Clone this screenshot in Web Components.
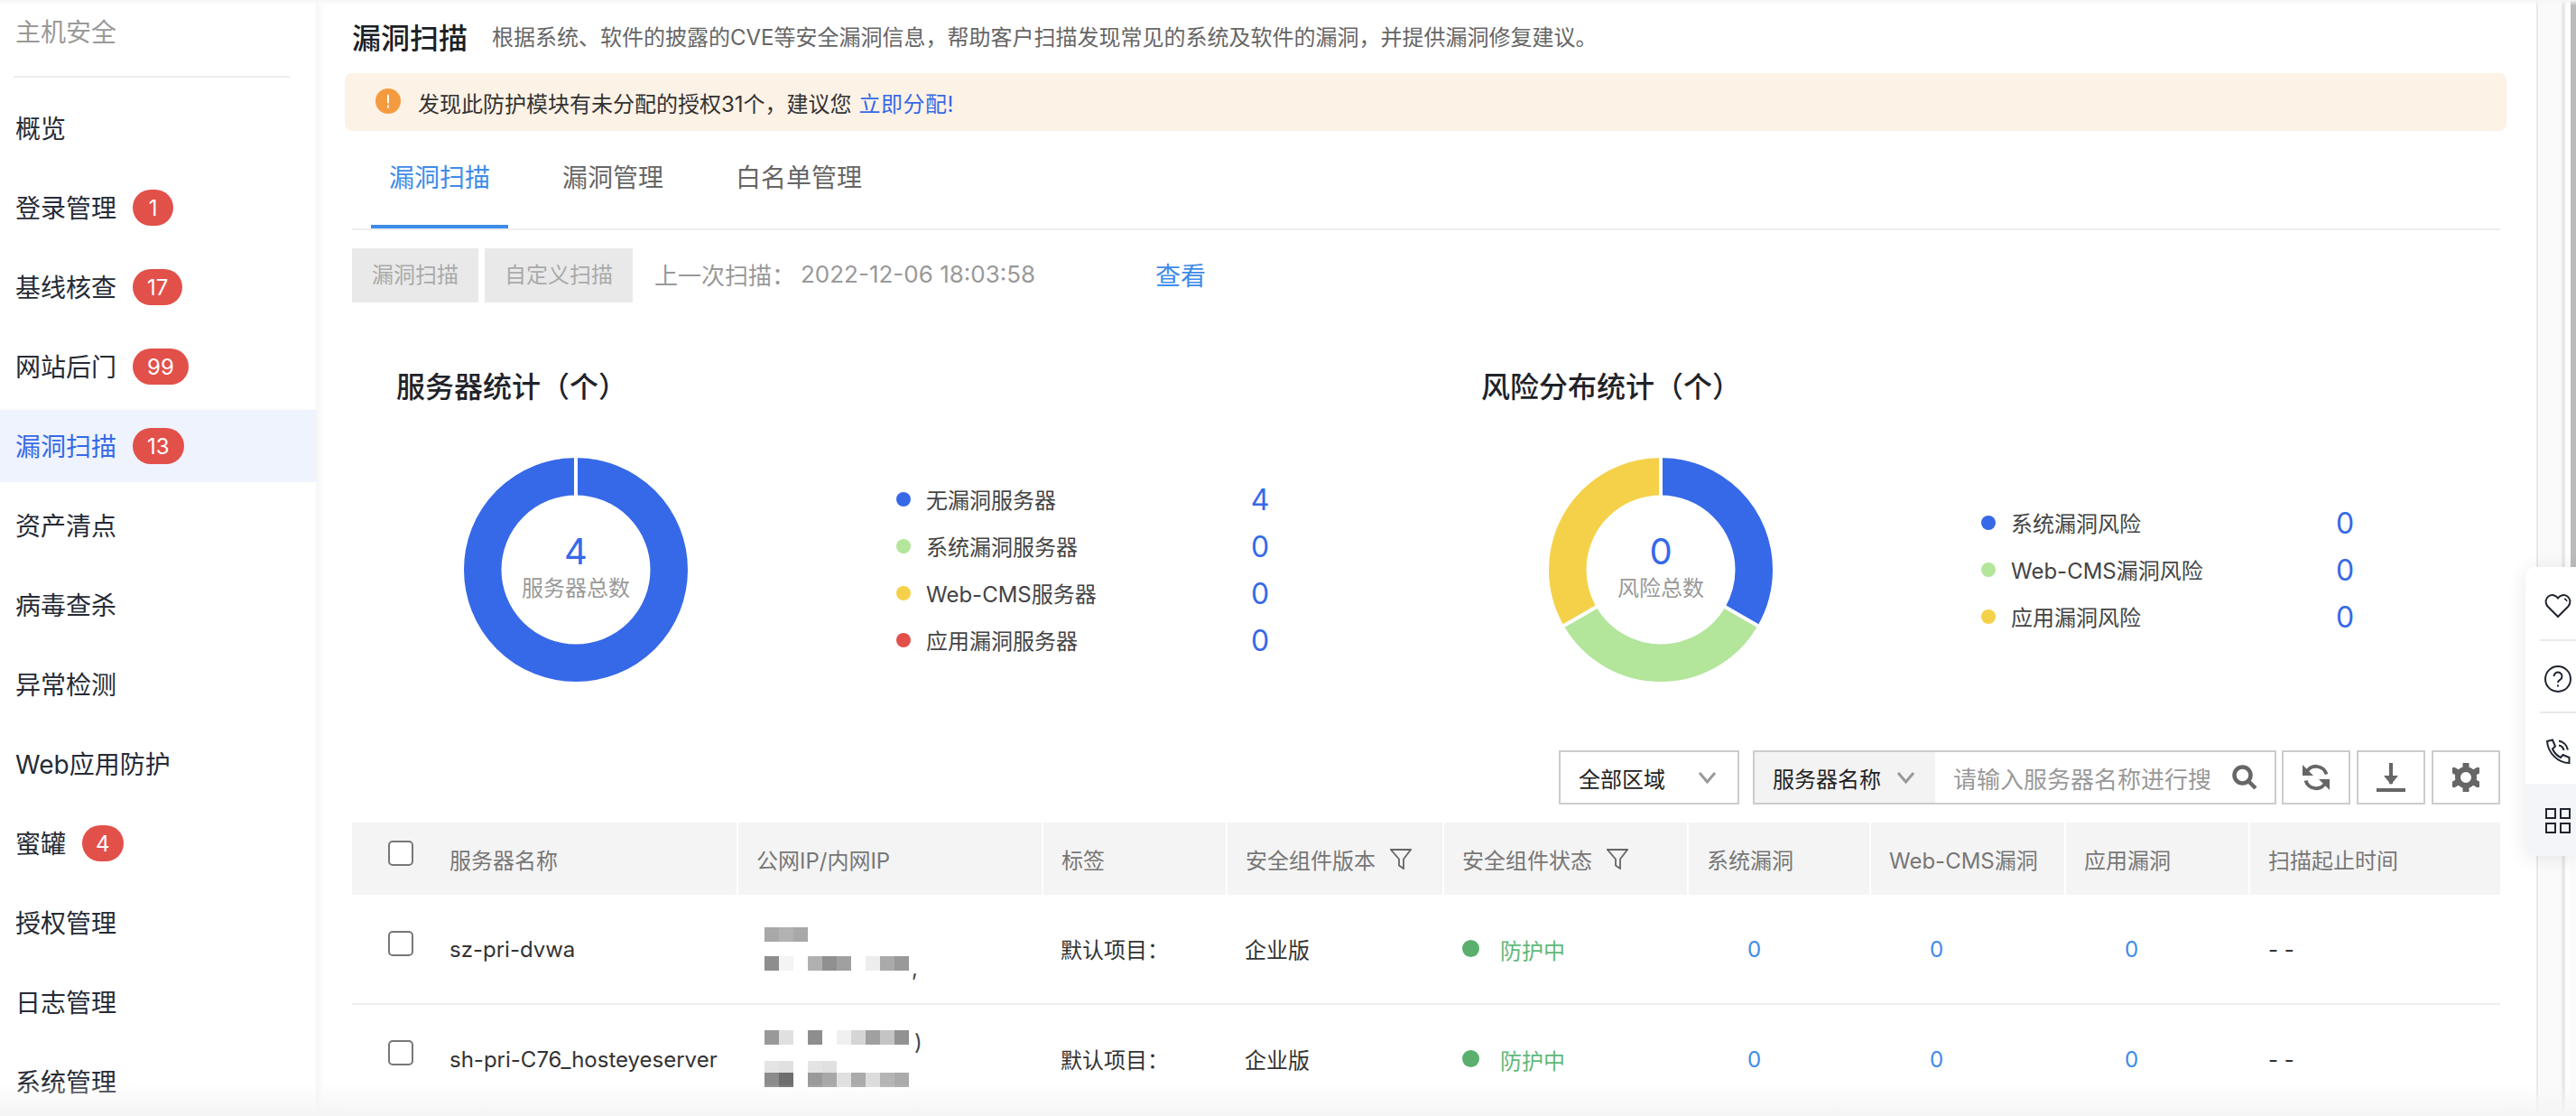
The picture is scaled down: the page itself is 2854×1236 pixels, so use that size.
<!doctype html>
<html lang="zh">
<head>
<meta charset="utf-8">
<title>漏洞扫描</title>
<style>
  html, body { margin: 0; height: 1236px; overflow: hidden; background: #fff; }
  body { font-family: Inter, "Noto Sans CJK SC", sans-serif; }
</style>
</head>
<body>
<app-shell>
  <side-nav slot="nav" heading="主机安全">
    <nav-item>概览</nav-item>
    <nav-item badge="1">登录管理</nav-item>
    <nav-item badge="17">基线核查</nav-item>
    <nav-item badge="99">网站后门</nav-item>
    <nav-item badge="13" active>漏洞扫描</nav-item>
    <nav-item>资产清点</nav-item>
    <nav-item>病毒查杀</nav-item>
    <nav-item>异常检测</nav-item>
    <nav-item>Web应用防护</nav-item>
    <nav-item badge="4">蜜罐</nav-item>
    <nav-item>授权管理</nav-item>
    <nav-item>日志管理</nav-item>
    <nav-item>系统管理</nav-item>
  </side-nav>

  <page-head heading="漏洞扫描">根据系统、软件的披露的CVE等安全漏洞信息，帮助客户扫描发现常见的系统及软件的漏洞，并提供漏洞修复建议。</page-head>
  <alert-bar link="立即分配!">发现此防护模块有未分配的授权31个，建议您</alert-bar>
  <tab-bar>
    <tab-item active>漏洞扫描</tab-item>
    <tab-item>漏洞管理</tab-item>
    <tab-item>白名单管理</tab-item>
  </tab-bar>
  <scan-bar time="2022-12-06 18:03:58"></scan-bar>

  <stat-row>
    <stat-panel heading="服务器统计（个）" total="4" label="服务器总数" colors="#3669e8">
      <legend-row color="#3669e8" value="4">无漏洞服务器</legend-row>
      <legend-row color="#b3e59b" value="0">系统漏洞服务器</legend-row>
      <legend-row color="#f5d14a" value="0">Web-CMS服务器</legend-row>
      <legend-row color="#e2504a" value="0">应用漏洞服务器</legend-row>
    </stat-panel>
    <stat-panel heading="风险分布统计（个）" total="0" label="风险总数" colors="#3669e8,#b3e59b,#f5d14a">
      <legend-row color="#3669e8" value="0">系统漏洞风险</legend-row>
      <legend-row color="#b3e59b" value="0">Web-CMS漏洞风险</legend-row>
      <legend-row color="#f5d14a" value="0">应用漏洞风险</legend-row>
    </stat-panel>
  </stat-row>

  <table-tools></table-tools>

  <scan-table>
    <scan-row head>
      <scan-cell head first><check-box></check-box>服务器名称</scan-cell>
      <scan-cell head>公网IP/内网IP</scan-cell>
      <scan-cell head>标签</scan-cell>
      <scan-cell head>安全组件版本<filter-icon></filter-icon></scan-cell>
      <scan-cell head>安全组件状态<filter-icon></filter-icon></scan-cell>
      <scan-cell head>系统漏洞</scan-cell>
      <scan-cell head>Web-CMS漏洞</scan-cell>
      <scan-cell head>应用漏洞</scan-cell>
      <scan-cell head>扫描起止时间</scan-cell>
    </scan-row>
    <scan-row>
      <scan-cell first><check-box></check-box>sz-pri-dvwa</scan-cell>
      <scan-cell stack>
        <ip-blur cells="a8a8a8 b2b2b2 a8a8a8"></ip-blur>
        <ip-blur cells="8e8e8e f4f4f4 . b0b0b0 909090 a0a0a0 . ededed aaaaaa 999999" tail="," tail-x="3"></ip-blur>
      </scan-cell>
      <scan-cell tight>默认项目：</scan-cell>
      <scan-cell tight>企业版</scan-cell>
      <scan-cell><status-dot>防护中</status-dot></scan-cell>
      <scan-cell num>0</scan-cell>
      <scan-cell num>0</scan-cell>
      <scan-cell num>0</scan-cell>
      <scan-cell>- -</scan-cell>
    </scan-row>
    <scan-row>
      <scan-cell first><check-box></check-box>sh-pri-C76_hosteyeserver</scan-cell>
      <scan-cell stack>
        <ip-blur cells="999999 e0e0e0 . 8e8e8e . f0f0f0 d5d5d5 a0a0a0 c4c4c4 929292" tail=")" tail-x="6"></ip-blur>
        <ip-blur gap cells="e4e4e4 e0e0e0 . e4e4e4 e0e0e0" h="13"></ip-blur>
        <ip-blur cells="8c8c8c 6e6e6e . 9a9a9a a8a8a8 e0e0e0 aaaaaa dcdcdc b4b4b4 aaaaaa"></ip-blur>
      </scan-cell>
      <scan-cell tight>默认项目：</scan-cell>
      <scan-cell tight>企业版</scan-cell>
      <scan-cell><status-dot>防护中</status-dot></scan-cell>
      <scan-cell num>0</scan-cell>
      <scan-cell num>0</scan-cell>
      <scan-cell num>0</scan-cell>
      <scan-cell>- -</scan-cell>
    </scan-row>
  </scan-table>

  <float-dock slot="over"></float-dock>
</app-shell>

<script>
const FONT = 'Inter, "Noto Sans CJK SC", sans-serif';

class AppShell extends HTMLElement {
  constructor() {
    super();
    this.attachShadow({ mode: 'open' }).innerHTML = `
      <style>
        :host {
          display: grid;
          grid-template-columns: 350px 1fr 44px;
          height: 1236px;
          overflow: hidden;
          position: relative;
          font-family: ${FONT};
          background: #fff;
        }
        main {
          display: flex;
          flex-direction: column;
          padding: 0 40px;
          min-width: 0;
          height: 1236px;
          box-sizing: border-box;
          background: linear-gradient(90deg, #f6f6f6, #fff 10px);
        }
        .gutter {
          display: grid;
          grid-template-columns: 2px 26px 4px 6px 6px;
          height: 1236px;
        }
        .gutter i:nth-child(1), .gutter i:nth-child(3) { background: #e9e9e9; }
        .gutter i:nth-child(2) { background: #fafafa; }
        .gutter i:nth-child(4) { background: #fdfdfd; }
        .gutter i:nth-child(5) { background: linear-gradient(#bbb 800px, #fbfbfb 800px); }
        .fade {
          position: absolute;
          left: 0;
          right: 0;
          pointer-events: none;
        }
        .top { top: 0; height: 6px; background: linear-gradient(#f6f6f6, rgba(255,255,255,0)); }
        .bottom { bottom: 0; height: 36px; background: linear-gradient(rgba(245,245,245,0), #f5f5f5); }
      </style>
      <slot name="nav"></slot>
      <main><slot></slot></main>
      <div class="gutter"><i></i><i></i><i></i><i></i><i></i></div>
      <div class="fade top"></div>
      <div class="fade bottom"></div>
      <slot name="over"></slot>
    `;
  }
}

class SideNav extends HTMLElement {
  constructor() {
    super();
    this.attachShadow({ mode: 'open' }).innerHTML = `
      <style>
        :host {
          display: block;
          width: 350px;
          background: #fff;
        }
        h2 {
          margin: 0 15px;
          padding: 0 2px;
          height: 84px;
          box-sizing: content-box;
          border-bottom: 2px solid #eeeeee;
          width: 302px;
          font-size: 28px;
          font-weight: 400;
          line-height: 72px;
          color: #999;
        }
        .list {
          display: flex;
          flex-direction: column;
          gap: 8px;
          padding-top: 16px;
        }
      </style>
      <h2>${this.getAttribute('heading')}</h2>
      <div class="list"><slot></slot></div>
    `;
  }
}

class NavItem extends HTMLElement {
  constructor() {
    super();
    const badge = this.getAttribute('badge');
    this.attachShadow({ mode: 'open' }).innerHTML = `
      <style>
        :host {
          display: flex;
          align-items: center;
          gap: 18px;
          height: 80px;
          padding-left: 17px;
          font-size: 28px;
          color: #262b36;
        }
        :host([active]) { background: #eff3fd; color: #3669e8; }
        span { margin-bottom: 3px; }
        b {
          display: block;
          min-width: 15px;
          height: 40px;
          padding: 0 15px;
          border-radius: 20px;
          background: #e2504a;
          color: #fff;
          font-size: 24px;
          font-weight: 400;
          line-height: 41px;
          text-align: center;
        }
        b.two { padding: 0 16px; }
      </style>
      <span><slot></slot></span>
      ${badge ? `<b class="${badge.length > 1 ? 'two' : ''}">${badge}</b>` : ''}
    `;
  }
}

class PageHead extends HTMLElement {
  constructor() {
    super();
    this.attachShadow({ mode: 'open' }).innerHTML = `
      <style>
        :host {
          display: flex;
          align-items: center;
          gap: 27px;
          height: 81px;
          flex: none;
          box-sizing: border-box;
          padding-bottom: 2px;
        }
        h1 { margin: 0; font-size: 32px; font-weight: 500; color: #1b1f27; }
        p { margin: 0; font-size: 24px; color: #666; }
      </style>
      <h1>${this.getAttribute('heading')}</h1>
      <p><slot></slot></p>
    `;
  }
}

class AlertBar extends HTMLElement {
  constructor() {
    super();
    this.attachShadow({ mode: 'open' }).innerHTML = `
      <style>
        :host {
          display: flex;
          align-items: center;
          flex: none;
          height: 64px;
          margin: 0 -7px 0 -8px;
          padding-left: 34px;
          border-radius: 8px;
          background: #fdf2e6;
          font-size: 24px;
          color: #333;
        }
        svg { margin-right: 19px; margin-bottom: 2px; }
        a { margin-left: 8px; color: #3669e8; letter-spacing: 0.5px; }
      </style>
      <svg width="28" height="28" viewBox="0 0 28 28">
        <circle cx="14" cy="14" r="14" fill="#f59b3f"/>
        <rect x="13" y="6.500" width="2" height="10" rx="1" fill="#fff"/>
        <rect x="13" y="18.500" width="2" height="3" fill="#fff"/>
      </svg>
      <span><slot></slot></span><a>${this.getAttribute('link')}</a>
    `;
  }
}

class TabBar extends HTMLElement {
  constructor() {
    super();
    this.attachShadow({ mode: 'open' }).innerHTML = `
      <style>
        :host {
          display: flex;
          gap: 40px;
          flex: none;
          height: 110px;
          box-sizing: border-box;
          padding-left: 21px;
          border-bottom: 2px solid #eeeeee;
        }
      </style>
      <slot></slot>
    `;
  }
}

class TabItem extends HTMLElement {
  constructor() {
    super();
    this.attachShadow({ mode: 'open' }).innerHTML = `
      <style>
        :host {
          display: block;
          height: 108px;
          box-sizing: border-box;
          padding: 34px 20px 0;
          font-size: 28px;
          line-height: 36px;
          color: #666;
        }
        :host([active]) { color: #3e8bea; border-bottom: 4px solid #3e8bea; }
      </style>
      <slot></slot>
    `;
  }
}

class ScanBar extends HTMLElement {
  constructor() {
    super();
    this.attachShadow({ mode: 'open' }).innerHTML = `
      <style>
        :host {
          display: flex;
          align-items: center;
          flex: none;
          height: 60px;
          margin-top: 20px;
          font-size: 24px;
          color: #999;
        }
        .btn {
          height: 60px;
          padding: 0 22px;
          margin-right: 7px;
          background: #e9e9e9;
          color: #aaa;
          line-height: 60px;
        }
        .last { margin-left: 17px; width: 162px; font-size: 26px; padding-bottom: 4px; }
        .time { width: 393px; font-size: 26px; padding-bottom: 3px; }
        a { font-size: 28px; color: #3e8bea; padding-bottom: 3px; }
      </style>
      <span class="btn">漏洞扫描</span>
      <span class="btn">自定义扫描</span>
      <span class="last">上一次扫描：</span>
      <span class="time">${this.getAttribute('time')}</span>
      <a>查看</a>
    `;
  }
}

class StatRow extends HTMLElement {
  constructor() {
    super();
    this.attachShadow({ mode: 'open' }).innerHTML = `
      <style>
        :host {
          display: grid;
          grid-template-columns: 1202px 1fr;
          flex: none;
          padding-top: 69px;
        }
      </style>
      <slot></slot>
    `;
  }
}

class StatPanel extends HTMLElement {
  constructor() {
    super();
    const colors = this.getAttribute('colors').split(',');
    const r = 103.25;
    const len = 2 * Math.PI * r;
    const seg = len / colors.length;
    const arcs = colors.map((c, i) => `
      <circle cx="124" cy="124" r="${r}" fill="none" stroke="${c}" stroke-width="41.5"
        stroke-dasharray="${seg} ${len - seg}" stroke-dashoffset="${-seg * i}"
        transform="rotate(-90 124 124)"/>`).join('');
    const gaps = colors.map((c, i) => `
      <line x1="124" y1="124" x2="124" y2="0" stroke="#fff" stroke-width="4"
        transform="rotate(${360 / colors.length * i} 124 124)"/>`).join('');
    this.attachShadow({ mode: 'open' }).innerHTML = `
      <style>
        :host { display: block; }
        h3 {
          margin: 3px 0 56px 49px;
          font-size: 32px;
          font-weight: 500;
          line-height: 44px;
          color: #1f2329;
        }
        .body { display: flex; align-items: center; padding-left: 124px; }
        .donut { display: grid; width: 248px; height: 248px; margin-right: 231px; }
        .donut > * { grid-area: 1 / 1; }
        .center {
          display: flex;
          flex-direction: column;
          align-items: center;
          justify-content: center;
        }
        .num { font-size: 40px; line-height: 42px; color: #3669e8; }
        .lab { font-size: 24px; line-height: 40px; color: #999; }
        .legend { display: flex; flex-direction: column; }
      </style>
      <h3>${this.getAttribute('heading')}</h3>
      <div class="body">
        <div class="donut">
          <svg width="248" height="248" viewBox="0 0 248 248">${arcs}${gaps}</svg>
          <div class="center">
            <span class="num">${this.getAttribute('total')}</span>
            <span class="lab">${this.getAttribute('label')}</span>
          </div>
        </div>
        <div class="legend"><slot></slot></div>
      </div>
    `;
  }
}

class LegendRow extends HTMLElement {
  constructor() {
    super();
    this.attachShadow({ mode: 'open' }).innerHTML = `
      <style>
        :host {
          display: grid;
          grid-template-columns: 33px 350px 40px;
          align-items: center;
          height: 52px;
          font-size: 24px;
          color: #444;
        }
        i { display: block; width: 16px; height: 16px; border-radius: 50%; background: ${this.getAttribute('color')}; }
        span { padding-bottom: 2px; }
        b { font-size: 32px; font-weight: 400; color: #3669e8; text-align: center; }
      </style>
      <i></i><span><slot></slot></span><b>${this.getAttribute('value')}</b>
    `;
  }
}

class TableTools extends HTMLElement {
  constructor() {
    super();
    const chevron = `<svg width="21" height="14" viewBox="0 0 21 14"><path d="M2 2l8.500 10L19 2" fill="none" stroke="#999" stroke-width="3"/></svg>`;
    this.attachShadow({ mode: 'open' }).innerHTML = `
      <style>
        :host {
          display: flex;
          justify-content: flex-end;
          flex: none;
          height: 60px;
          margin-top: 76px;
          font-size: 24px;
          color: #222;
        }
        .box {
          display: flex;
          align-items: center;
          height: 60px;
          box-sizing: border-box;
          border: 2px solid #cccccc;
        }
        .area { width: 200px; padding: 0 23px 0 20px; justify-content: space-between; margin-right: 15px; }
        .search { width: 580px; margin-right: 6px; }
        .prefix {
          display: flex;
          align-items: center;
          gap: 17px;
          width: 200px;
          height: 56px;
          box-sizing: border-box;
          padding: 0 0 0 20px;
          background: #f3f3f3;
          flex: none;
        }
        .input {
          width: 289px;
          margin: 0 20px;
          flex: none;
          white-space: nowrap;
          font-size: 26px;
          color: #999;
        }
        .icon { width: 76px; justify-content: center; margin-right: 7px; }
        .icon:last-child { margin-right: 0; }
      </style>
      <div class="box area"><span>全部区域</span>${chevron}</div>
      <div class="box search">
        <div class="prefix"><span>服务器名称</span>${chevron}</div>
        <div class="input">请输入服务器名称进行搜</div>
        <svg width="28" height="28" viewBox="0 0 28 28">
          <circle cx="11.500" cy="11.500" r="9" fill="none" stroke="#666" stroke-width="4.500"/>
          <path d="M18 18l8 8" stroke="#666" stroke-width="4.500"/>
        </svg>
      </div>
      <div class="box icon">
        <svg width="32" height="32" viewBox="0 0 32 32" fill="none" stroke="#666" stroke-width="4">
          <path d="M5 11A12 12 0 0 1 27.500 12.500"/>
          <path d="M27 21A12 12 0 0 1 4.500 19.500"/>
          <path d="M1 2v12h12z" fill="#666" stroke="none"/>
          <path d="M31 30V18H19z" fill="#666" stroke="none"/>
        </svg>
      </div>
      <div class="box icon">
        <svg width="32" height="32" viewBox="0 0 32 32">
          <path d="M16 0v23" stroke="#666" stroke-width="4"/>
          <path d="M8 14h16l-8 10z" fill="#666"/>
          <rect y="28" width="32" height="4" fill="#666"/>
        </svg>
      </div>
      <div class="box icon">
        <svg width="30" height="32" viewBox="0 0 30 32" fill="none" stroke="#666">
          <circle cx="15" cy="16" r="9" stroke-width="6"/>
          <path d="M15 1v5M15 26v5M2 8.500l4.300 2.500M23.700 21l4.300 2.500M2 23.500l4.300-2.500M23.700 11l4.300-2.500" stroke-width="7" stroke-linecap="round"/>
        </svg>
      </div>
    `;
  }
}

class ScanTable extends HTMLElement {
  constructor() {
    super();
    this.attachShadow({ mode: 'open' }).innerHTML = `
      <style>
        :host {
          display: block;
          flex: none;
          margin-top: 20px;
          --cols: 428px 338px 204px 240px 271px 202px 216px 204px 277px;
        }
      </style>
      <slot></slot>
    `;
  }
}

class ScanRow extends HTMLElement {
  constructor() {
    super();
    this.attachShadow({ mode: 'open' }).innerHTML = `
      <style>
        :host {
          display: grid;
          grid-template-columns: var(--cols);
          height: 121.500px;
          box-sizing: border-box;
          border-bottom: 2px solid #eeeeee;
        }
        :host([head]) { height: 80px; border-bottom: 0; }
      </style>
      <slot></slot>
    `;
  }
}

class ScanCell extends HTMLElement {
  constructor() {
    super();
    this.attachShadow({ mode: 'open' }).innerHTML = `
      <style>
        :host {
          display: flex;
          align-items: center;
          padding: 2px 0 0 20px;
          font-size: 24px;
          color: #333;
          min-width: 0;
          white-space: nowrap;
          --check-gap: 14px;
        }
        :host([head]) {
          padding-top: 0;
          background: #f4f4f4;
          color: #777;
          border-right: 2px solid #fff;
          --check-gap: 12px;
        }
        :host([head]:last-child) { border-right: 0; }
        :host([first]) { padding-left: 40px; }
        :host([tight]) { padding: 0 0 0 19px; }
        :host([num]) { padding-left: 65px; color: #3e8bea; }
        :host([stack]) {
          flex-direction: column;
          align-items: flex-start;
          justify-content: center;
          gap: 16px;
          padding: 0 0 0 29px;
        }
      </style>
      <slot></slot>
    `;
  }
}

class CheckBox extends HTMLElement {
  constructor() {
    super();
    this.attachShadow({ mode: 'open' }).innerHTML = `
      <style>
        :host {
          display: block;
          width: 28px;
          height: 28px;
          margin: 0 40px var(--check-gap) 0;
          box-sizing: border-box;
          border: 2px solid #777;
          border-radius: 5px;
          background: #fff;
          flex: none;
        }
      </style>
    `;
  }
}

class FilterIcon extends HTMLElement {
  constructor() {
    super();
    this.attachShadow({ mode: 'open' }).innerHTML = `
      <style>
        :host { display: block; width: 24px; height: 24px; margin-left: 16px; }
      </style>
      <svg width="24" height="24" viewBox="0 0 24 24">
        <path d="M1 2h22l-8 10.500V23l-5-3.500v-7z" fill="none" stroke="#666" stroke-width="1.800"/>
      </svg>
    `;
  }
}

class StatusDot extends HTMLElement {
  constructor() {
    super();
    this.attachShadow({ mode: 'open' }).innerHTML = `
      <style>
        :host {
          display: flex;
          align-items: center;
          gap: 23px;
          color: #5fb878;
        }
        i { display: block; width: 19px; height: 19px; margin-bottom: 2px; border-radius: 50%; background: #5aaf6d; }
      </style>
      <i></i><span><slot></slot></span>
    `;
  }
}

// redacted address, drawn as the mosaic blocks of the screenshot
class IpBlur extends HTMLElement {
  constructor() {
    super();
    const h = this.getAttribute('h') || 16;
    const cells = this.getAttribute('cells').split(' ').map(c =>
      c === '.' ? '<i></i>' : `<i style="background:#${c}"></i>`).join('');
    const tail = this.getAttribute('tail');
    this.attachShadow({ mode: 'open' }).innerHTML = `
      <style>
        :host { display: flex; height: ${h}px; }
        :host([gap]) { margin: 2px 0 -16px; }
        i { display: block; width: 16px; height: ${h}px; }
        span {
          font-size: 24px;
          line-height: ${h}px;
          color: #444;
          padding: 6px 0 0 ${this.getAttribute('tail-x') || 0}px;
        }
      </style>
      ${cells}${tail ? `<span>${tail}</span>` : ''}
    `;
  }
}

class FloatDock extends HTMLElement {
  constructor() {
    super();
    this.attachShadow({ mode: 'open' }).innerHTML = `
      <style>
        :host {
          position: absolute;
          top: 628px;
          right: 0;
          width: 56px;
          display: flex;
          flex-direction: column;
          background: #fff;
          border-radius: 10px 0 0 10px;
          box-shadow: 0 2px 22px rgba(0, 0, 0, 0.09);
          overflow: hidden;
        }
        div {
          display: flex;
          align-items: center;
          justify-content: center;
          padding: 6px 0 0 16px;
          height: 80px;
          box-sizing: border-box;
        }
        .line { margin-left: 16px; padding-left: 0; border-bottom: 2px solid #eaeaea; }
        .heart { height: 82px; }
        .phone { height: 78px; }
        .last { padding-top: 2px; background: #f4f5f8; }
        svg { fill: none; stroke: #1f2430; stroke-width: 2; }
      </style>
      <div class="line heart">
        <svg width="30" height="28" viewBox="0 0 30 28">
          <path d="M15 26L3.500 14.500C0.500 11 1 6 4.500 3.500C8 1 12.500 2 15 5.500C17.500 2 22 1 25.500 3.500C29 6 29.500 11 26.500 14.500z"/>
          <path d="M22 6c1.500.5 2.500 1.500 3 3" stroke-width="1.500"/>
        </svg>
      </div>
      <div class="line">
        <svg width="30" height="30" viewBox="0 0 30 30">
          <circle cx="15" cy="15" r="14"/>
          <path d="M10.500 12a4.500 4.500 0 1 1 6.800 3.900c-1.500.9-2.300 1.700-2.300 3.100"/>
          <path d="M15 21.500V23.500"/>
        </svg>
      </div>
      <div class="phone">
        <svg width="28" height="28" viewBox="0 0 28 28">
          <path d="M2 3L8 1.500L11 8.500L8 11.500C10 16 13 19 17 21L19.500 18L26.500 21V27C14 27 3 16 2 3z"/>
          <path d="M15 2.500C20 3.500 24 7.500 25 12.500M15 7.500C18 8 20 10.500 20.500 13"/>
        </svg>
      </div>
      <div class="last">
        <svg width="28" height="28" viewBox="0 0 28 28">
          <rect x="1" y="1" width="10" height="10"/><rect x="17" y="1" width="10" height="10"/>
          <rect x="1" y="17" width="10" height="10"/><rect x="17" y="17" width="10" height="10"/>
        </svg>
      </div>
    `;
  }
}

customElements.define('app-shell', AppShell);
customElements.define('side-nav', SideNav);
customElements.define('nav-item', NavItem);
customElements.define('page-head', PageHead);
customElements.define('alert-bar', AlertBar);
customElements.define('tab-bar', TabBar);
customElements.define('tab-item', TabItem);
customElements.define('scan-bar', ScanBar);
customElements.define('stat-row', StatRow);
customElements.define('stat-panel', StatPanel);
customElements.define('legend-row', LegendRow);
customElements.define('table-tools', TableTools);
customElements.define('scan-table', ScanTable);
customElements.define('scan-row', ScanRow);
customElements.define('scan-cell', ScanCell);
customElements.define('check-box', CheckBox);
customElements.define('filter-icon', FilterIcon);
customElements.define('status-dot', StatusDot);
customElements.define('ip-blur', IpBlur);
customElements.define('float-dock', FloatDock);
</script>
</body>
</html>
